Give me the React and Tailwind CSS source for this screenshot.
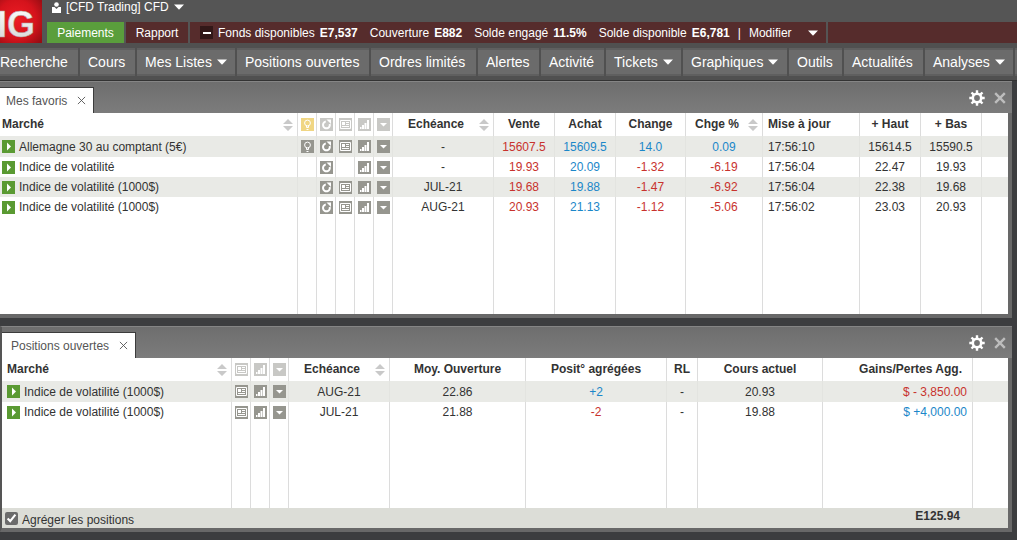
import { useState } from "react";

const NAV = [
  { label: "Recherche", width: "w-[78px]", first: true },
  { label: "Cours", width: "w-[55px]" },
  { label: "Mes Listes", width: "w-[98px]", menu: true },
  { label: "Positions ouvertes", width: "w-[132px]" },
  { label: "Ordres limités", width: "w-[105px]" },
  { label: "Alertes", width: "w-[61px]" },
  { label: "Activité", width: "w-[63px]" },
  { label: "Tickets", width: "w-[75px]", menu: true },
  { label: "Graphiques", width: "w-[104px]", menu: true },
  { label: "Outils", width: "w-[53px]" },
  { label: "Actualités", width: "w-[79px]" },
  { label: "Analyses", width: "w-[88px]", menu: true },
];

const FUNDS = [
  { label: "Fonds disponibles", value: "E7,537" },
  { label: "Couverture", value: "E882" },
  { label: "Solde engagé", value: "11.5%" },
  { label: "Solde disponible", value: "E6,781" },
];

const FAVORIS = [
  { id: 1, nom: "Allemagne 30 au comptant (5€)", bulb: true, news: true, echeance: "-", vente: "15607.5", achat: "15609.5", change: "14.0", pct: "0.09", heure: "17:56:10", haut: "15614.5", bas: "15590.5" },
  { id: 2, nom: "Indice de volatilité", echeance: "-", vente: "19.93", achat: "20.09", change: "-1.32", pct: "-6.19", heure: "17:56:04", haut: "22.47", bas: "19.93" },
  { id: 3, nom: "Indice de volatilité (1000$)", news: true, echeance: "JUL-21", vente: "19.68", achat: "19.88", change: "-1.47", pct: "-6.92", heure: "17:56:04", haut: "22.38", bas: "19.68" },
  { id: 4, nom: "Indice de volatilité (1000$)", news: true, echeance: "AUG-21", vente: "20.93", achat: "21.13", change: "-1.12", pct: "-5.06", heure: "17:56:02", haut: "23.03", bas: "20.93" },
];

const POSITIONS = [
  { id: 1, nom: "Indice de volatilité (1000$)", echeance: "AUG-21", ouverture: "22.86", taille: "+2", cours: "20.93", gain: "$ - 3,850.00" },
  { id: 2, nom: "Indice de volatilité (1000$)", echeance: "JUL-21", ouverture: "21.88", taille: "-2", cours: "19.88", gain: "$ +4,000.00" },
];

const RED = "text-[#c8322d]";
const BLUE = "text-[#1b87c9]";
const signColor = (v) => (v.includes("-") ? RED : BLUE);

function Logo() {
  return (
    <svg width="42" height="43" viewBox="0 0 42 43" aria-label="IG" className="shrink-0">
      <defs>
        <radialGradient id="logoRed" cx="0.4" cy="0.45" r="0.75">
          <stop offset="0" stopColor="#ee1c24" />
          <stop offset="0.6" stopColor="#d5131c" />
          <stop offset="1" stopColor="#980d13" />
        </radialGradient>
        <linearGradient id="logoSilver" x1="0" y1="0" x2="0" y2="1">
          <stop offset="0" stopColor="#ffffff" />
          <stop offset="1" stopColor="#d4d4d4" />
        </linearGradient>
      </defs>
      <rect width="42" height="43" fill="url(#logoRed)" />
      <text x="-3" y="37" fontFamily="Liberation Sans, sans-serif" fontSize="36" fontWeight="700" fill="url(#logoSilver)" stroke="#b0a0a0" strokeWidth="0.5">
        IG
      </text>
    </svg>
  );
}

function Caret() {
  return (
    <svg width="10" height="6" viewBox="0 0 10 6" className="shrink-0">
      <path d="M0 0.5h10L5 5.800z" fill="#fff" />
    </svg>
  );
}

function Sort() {
  return (
    <svg width="10" height="12" viewBox="0 0 10 12" className="mt-[2px] shrink-0">
      <path d="M0 5L5 0l5 5zM0 7h10l-5 5z" fill="#c9c9c9" />
    </svg>
  );
}

function Gear() {
  return (
    <svg width="16" height="16" viewBox="0 0 16 16" fill="none" stroke="#fff">
      <circle cx="8" cy="8" r="4.2" strokeWidth="2.6" />
      <path d="M8 0.3v3M8 12.7v3M0.3 8h3M12.7 8h3M2.5 2.5l2.2 2.2M11.3 11.3l2.2 2.2M2.5 13.5l2.2-2.2M11.3 4.7l2.2-2.2" strokeWidth="2.4" />
    </svg>
  );
}

function Cross({ size, color, weight }) {
  return (
    <svg width={size} height={size} viewBox="0 0 10 10" stroke={color} strokeWidth={weight}>
      <path d="M1 1l8 8M9 1L1 9" />
    </svg>
  );
}

function Glyph({ type }) {
  if (type === "bulb")
    return (
      <g fill="none" stroke="#fff">
        <circle cx="6.5" cy="5" r="2.9" />
        <path d="M5.5 7.5v2h2v-2M5.5 11.5h2" />
      </g>
    );
  if (type === "refresh")
    return (
      <g>
        <path d="M5.8 3.6A3.4 3.4 0 1 0 9.7 6" fill="none" stroke="#fff" strokeWidth="2" />
        <path d="M6.5 1.5H11V6z" fill="#fff" />
      </g>
    );
  if (type === "news")
    return (
      <g>
        <path d="M1.5 2.5h10v8h-10z" fill="none" stroke="#fff" />
        <path d="M3 4h3v3H3z" fill="#fff" />
        <path d="M7 4.5h3M7 6.5h3M3 8.5h7" stroke="#fff" />
      </g>
    );
  if (type === "chart") return <path d="M2 9h1.500v2H2zM4 7h2v4H4zM6.500 5h2v6h-2zM9 2h2v9H9z" fill="#fff" />;
  return <path d="M3 5h7L6.500 8.500z" fill="#fff" />;
}

// Small square icon used in the header (faded) and in the rows
function Tile({ type, faded }) {
  let fill = faded ? "#c8c8c5" : "#96968f";
  if (faded && type === "bulb") fill = "#f0d684";
  return (
    <svg width="13" height="13" viewBox="0 0 13 13" className={`mx-auto block ${faded ? "mt-[2px]" : ""}`}>
      <rect width="13" height="13" fill={fill} />
      <Glyph type={type} />
    </svg>
  );
}

function Market({ name }) {
  return (
    <div className="flex items-center gap-1">
      <button aria-label="Ouvrir" className="shrink-0">
        <svg width="13" height="13" viewBox="0 0 13 13" className="block">
          <rect width="13" height="13" fill="#5a9a32" />
          <path d="M5 2.500l4 4-4 4z" fill="#fff" />
        </svg>
      </button>
      <span>{name}</span>
    </div>
  );
}

function Th({ children, className = "", last }) {
  return <th className={`h-[23px] p-0 pb-[2px] font-bold whitespace-nowrap ${last ? "" : "border-r border-[#dcdcdc]"} ${className}`}>{children}</th>;
}

function Td({ children, className = "text-center" }) {
  return <td className={`p-0 whitespace-nowrap border-r border-[#dcdcdc] group-odd:border-[#e3e4e0] ${className}`}>{children}</td>;
}

function SortHead({ label }) {
  return (
    <div className="flex items-center pr-1">
      <span className="flex-1 text-center">{label}</span>
      <Sort />
    </div>
  );
}

// Empty row that carries the column rules down to the bottom of the panel
function Filler({ count }) {
  return (
    <tr>
      {Array.from({ length: count }, (_, i) => (
        <td key={i} className="p-0 border-r border-[#dcdcdc]"></td>
      ))}
      <td className="p-0"></td>
    </tr>
  );
}

function Panel({ title, tabClass, bodyClass = "", children }) {
  return (
    <section className="mr-[5px]">
      <div className={`flex h-8 items-end justify-between border-t border-[#858585] bg-linear-to-b from-[#6e6e6e] to-[#7c7c7c] ${bodyClass}`}>
        <div className={`flex h-[26px] items-center border-t border-r border-[#3c3c3c] bg-white text-[#555] ${tabClass}`}>
          <h2>{title}</h2>
          <button aria-label="Fermer l'onglet">
            <Cross size={9} color="#555" weight={1} />
          </button>
        </div>
        <div className="flex h-full items-center gap-[9px] pr-[6px]">
          <button aria-label="Réglages">
            <Gear />
          </button>
          <button aria-label="Fermer">
            <Cross size={12} color="#bdbdbd" weight={2} />
          </button>
        </div>
      </div>
      <div className={`border-r-4 border-b-4 border-[#686868] bg-white ${bodyClass}`}>{children}</div>
    </section>
  );
}

function TopBar() {
  return (
    <header className="flex bg-[#555] text-white">
      <Logo />
      <div className="flex min-w-0 flex-1 flex-col">
        <button className="flex h-[14px] items-center self-start pl-[10px] text-[12px]">
          <svg width="9" height="11" viewBox="0 0 9 11" className="mr-[5px]">
            <circle cx="4.500" cy="2.500" r="2.300" fill="#fff" />
            <path d="M0 5l2.500 0L4.500 7l2-2H9v6H0z" fill="#fff" />
          </svg>
          <span className="mr-[5px]">[CFD Trading] CFD</span>
          <Caret />
        </button>
        <div className="mt-2 flex h-[21px] gap-[2px] pl-[5px] text-[12px]">
          <button className="w-[77px] bg-[#5a9e3c]">Paiements</button>
          <button className="w-[62px] bg-[#562c2c]">Rapport</button>
          <div className="flex w-[636px] items-center bg-[#562c2c] pl-[10px] whitespace-nowrap">
            <button aria-label="Réduire" className="mr-[5px] flex h-[13px] w-[13px] items-center justify-center bg-[#321818]">
              <span className="h-[2px] w-2 bg-white"></span>
            </button>
            <dl className="flex gap-3">
              {FUNDS.map((f) => (
                <div key={f.label} className="flex gap-[5px]">
                  <dt>{f.label}</dt>
                  <dd className="font-bold">{f.value}</dd>
                </div>
              ))}
            </dl>
            <span className="mx-2">|</span>
            <button className="flex items-center gap-4">
              Modifier
              <Caret />
            </button>
          </div>
          <div className="flex-1 bg-[#562c2c]"></div>
        </div>
      </div>
    </header>
  );
}

function Nav() {
  return (
    <nav className="flex h-[38px] gap-[2px] overflow-hidden border-b border-[#333] bg-[#505050] pt-[5px] text-[14px] text-white">
      {NAV.map((item) => (
        <button
          key={item.label}
          className={`flex h-7 shrink-0 items-center gap-[5px] border-t-2 border-b-2 border-[#5f5f5f] bg-[#6b6b6b] whitespace-nowrap ${item.first ? "pl-0" : "pl-2"} ${item.width}`}
        >
          {item.label}
          {item.menu && <Caret />}
        </button>
      ))}
      <div className="h-7 flex-1 border-t-2 border-b-2 border-[#5f5f5f] bg-[#6b6b6b]"></div>
    </nav>
  );
}

function Favoris() {
  return (
    <table className="h-[201px] w-full table-fixed border-separate border-spacing-0">
      <colgroup>
        <col className="w-[298px]" />
        <col className="w-[19px]" />
        <col className="w-[19px]" />
        <col className="w-[19px]" />
        <col className="w-[19px]" />
        <col className="w-[19px]" />
        <col className="w-[101px]" />
        <col className="w-[61px]" />
        <col className="w-[61px]" />
        <col className="w-[70px]" />
        <col className="w-[77px]" />
        <col className="w-[97px]" />
        <col className="w-[61px]" />
        <col className="w-[61px]" />
        <col />
      </colgroup>
      <thead>
        <tr>
          <Th>
            <div className="flex items-center justify-between pr-1 pl-[2px]">
              Marché
              <Sort />
            </div>
          </Th>
          <Th><Tile type="bulb" faded /></Th>
          <Th><Tile type="refresh" faded /></Th>
          <Th><Tile type="news" faded /></Th>
          <Th><Tile type="chart" faded /></Th>
          <Th><Tile type="menu" faded /></Th>
          <Th><SortHead label="Echéance" /></Th>
          <Th>Vente</Th>
          <Th>Achat</Th>
          <Th>Change</Th>
          <Th><SortHead label="Chge %" /></Th>
          <Th className="pl-[5px] text-left">Mise à jour</Th>
          <Th>+ Haut</Th>
          <Th>+ Bas</Th>
          <Th last />
        </tr>
      </thead>
      <tbody>
        {FAVORIS.map((row) => (
          <tr key={row.id} className="group h-5 first:h-[21px] odd:bg-[#e9eae6]">
            <Td className="pl-[2px]"><Market name={row.nom} /></Td>
            <Td>{row.bulb && <Tile type="bulb" />}</Td>
            <Td><Tile type="refresh" /></Td>
            <Td>{row.news && <Tile type="news" />}</Td>
            <Td><Tile type="chart" /></Td>
            <Td><Tile type="menu" /></Td>
            <Td>{row.echeance}</Td>
            <Td className={`text-center ${RED}`}>{row.vente}</Td>
            <Td className={`text-center ${BLUE}`}>{row.achat}</Td>
            <Td className={`text-center ${signColor(row.change)}`}>{row.change}</Td>
            <Td className={`text-center ${signColor(row.pct)}`}>{row.pct}</Td>
            <Td className="pl-[5px]">{row.heure}</Td>
            <Td>{row.haut}</Td>
            <Td>{row.bas}</Td>
            <td></td>
          </tr>
        ))}
        <Filler count={14} />
      </tbody>
    </table>
  );
}

function Positions() {
  const [agreger, setAgreger] = useState(true);

  return (
    <>
      <table className="h-[150px] w-full table-fixed border-separate border-spacing-0">
        <colgroup>
          <col className="w-[230px]" />
          <col className="w-[19px]" />
          <col className="w-[19px]" />
          <col className="w-[19px]" />
          <col className="w-[101px]" />
          <col className="w-[136px]" />
          <col className="w-[141px]" />
          <col className="w-[31px]" />
          <col className="w-[125px]" />
          <col className="w-[150px]" />
          <col />
        </colgroup>
        <thead>
          <tr>
            <Th>
              <div className="flex items-center justify-between pr-1 pl-[5px]">
                Marché
                <Sort />
              </div>
            </Th>
            <Th><Tile type="news" faded /></Th>
            <Th><Tile type="chart" faded /></Th>
            <Th><Tile type="menu" faded /></Th>
            <Th><SortHead label="Echéance" /></Th>
            <Th>Moy. Ouverture</Th>
            <Th>Posit° agrégées</Th>
            <Th>RL</Th>
            <Th>Cours actuel</Th>
            <Th className="pr-[10px] text-right">Gains/Pertes Agg.</Th>
            <Th last />
          </tr>
        </thead>
        <tbody>
          {POSITIONS.map((row) => (
            <tr key={row.id} className="group h-5 first:h-[21px] odd:bg-[#e9eae6]">
              <Td className="pl-[5px]"><Market name={row.nom} /></Td>
              <Td><Tile type="news" /></Td>
              <Td><Tile type="chart" /></Td>
              <Td><Tile type="menu" /></Td>
              <Td>{row.echeance}</Td>
              <Td>{row.ouverture}</Td>
              <Td className={`text-center ${signColor(row.taille)}`}>{row.taille}</Td>
              <Td>-</Td>
              <Td>{row.cours}</Td>
              <Td className={`pr-[5px] text-right ${signColor(row.gain)}`}>{row.gain}</Td>
              <td></td>
            </tr>
          ))}
          <Filler count={10} />
        </tbody>
      </table>
      <div className="flex h-5 items-start justify-between bg-[#dcddd7] pr-12 pl-[3px]">
        <label className="flex items-start gap-1 self-end">
          <input type="checkbox" checked={agreger} onChange={(e) => setAgreger(e.target.checked)} className="h-[13px] w-[13px] accent-[#6b6b6b]" />
          Agréger les positions
        </label>
        <strong>E125.94</strong>
      </div>
    </>
  );
}

export default function App() {
  return (
    <div className="min-h-screen bg-[#3c3d3f] font-['Liberation_Sans',Arial,sans-serif] text-[12px] leading-4 text-[#333]">
      <TopBar />
      <Nav />
      <main className="flex flex-col gap-2">
        <Panel title="Mes favoris" tabClass="gap-[10px] pl-[6px] pr-[7px]">
          <Favoris />
        </Panel>
        <Panel title="Positions ouvertes" tabClass="gap-[10px] pl-[9px] pr-[7px]" bodyClass="border-l-2 border-l-[#555]">
          <Positions />
        </Panel>
      </main>
    </div>
  );
}
